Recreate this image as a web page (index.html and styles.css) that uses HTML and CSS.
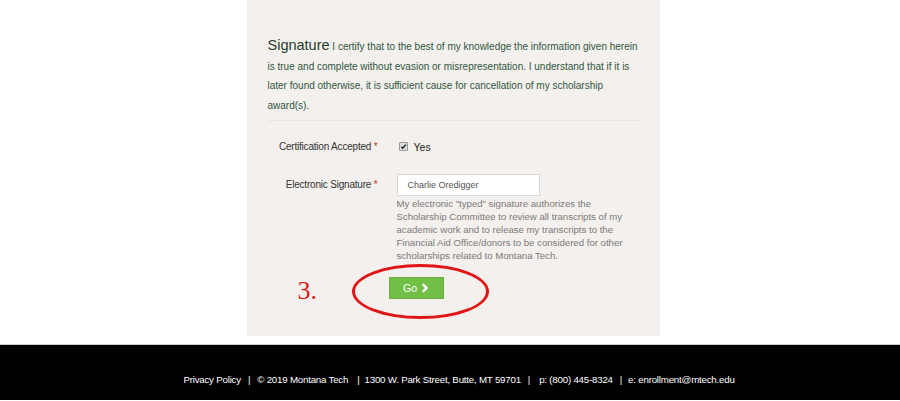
FILE: index.html
```html
<!DOCTYPE html>
<html>
<head>
<meta charset="utf-8">
<link rel="stylesheet" href="styles.css">
</head>
<body>
<main class="page">
  <section class="panel">
    <p class="intro"><span class="intro-title">Signature</span> I certify that to the best of my knowledge the information given herein is true and complete without evasion or misrepresentation. I understand that if it is later found otherwise, it is sufficient cause for cancellation of my scholarship award(s).</p>
    <hr class="rule">
    <div class="form">
      <div class="label">Certification Accepted <span class="req">*</span></div>
      <div class="control check-row"><span class="checkbox"><svg viewBox="0 0 8 8" width="8" height="8"><path d="M1.5 4.2 L3.2 6 L6.6 1.8" fill="none" stroke="#222" stroke-width="1.6"/></svg></span><span class="yes">Yes</span></div>
      <div class="label label-sig">Electronic Signature <span class="req">*</span></div>
      <div class="control">
        <div class="input">Charlie Oredigger</div>
        <p class="help">My electronic "typed" signature authorizes the Scholarship Committee to review all transcripts of my academic work and to release my transcripts to the Financial Aid Office/donors to be considered for other scholarships related to Montana Tech.</p>
      </div>
      <div class="label step-cell"></div>
      <div class="control btn-cell">
        <span class="step">3.</span>
        <span class="ring"></span>
        <button class="go">Go <svg viewBox="0 0 8 10" width="8" height="10"><path d="M1.6 1.2 L5.6 5 L1.6 8.8" fill="none" stroke="#fff" stroke-width="2.4"/></svg></button>
      </div>
    </div>
  </section>
</main>
<footer class="footer">
  <span>Privacy Policy</span><span class="sep sep-1">|</span><span>© 2019 Montana Tech</span><span class="sep sep-2">|</span><span>1300 W. Park Street, Butte, MT 59701</span><span class="sep sep-3">|</span><span>p: (800) 445-8324</span><span class="sep sep-4">|</span><span>e: enrollment@mtech.edu</span>
</footer>
</body>
</html>
```

FILE: styles.css
```css
html, body {
  margin: 0;
  padding: 0;
  background: #fff;
  font-family: "Liberation Sans", Arial, sans-serif;
}
.page {
  display: flex;
  justify-content: center;
  padding-left: 6px;
  padding-bottom: 8px;
  border-bottom: 1px solid #c9c9c9;
}
.panel {
  width: 372px;
  height: 300px;
  background: #f4f0ed;
  padding: 36px 20px 0 21px;
}
.intro {
  margin: 0;
  font-size: 10px;
  line-height: 19.5px;
  color: #2f5640;
}
.intro-title {
  font-size: 14.5px;
  color: #1f3d2c;
}
.rule {
  margin: 5px 0 0;
  border: 0;
  border-top: 1px solid #ebe5e1;
}
.form {
  display: grid;
  grid-template-columns: 110px 1fr;
  column-gap: 19px;
  margin-top: 17px;
  font-size: 10px;
  color: #333;
}
.label {
  text-align: right;
  line-height: 17px;
  letter-spacing: -0.2px;
  white-space: nowrap;
}
.req { color: #c0392b; }
.check-row {
  display: flex;
  align-items: center;
  gap: 6px;
  height: 17px;
  padding-left: 2px;
}
.checkbox {
  width: 7px;
  height: 7px;
  background: #ddd;
  border: 1px solid #999;
  border-radius: 1px;
  display: flex;
}
.checkbox svg { display: block; width: 7px; height: 7px; }
.yes { font-size: 10.5px; color: #222; }
.label-sig {
  margin-top: 19px;
  line-height: 22px;
}
.control { min-width: 0; }
.input {
  margin-top: 19px;
  width: 131px;
  height: 20px;
  line-height: 20px;
  border: 1px solid #d9d9d9;
  background: #fff;
  padding-left: 10px;
  font-size: 9px;
  color: #555;
}
.help {
  margin: 1px 0 0;
  width: 232px;
  font-size: 9.6px;
  line-height: 13px;
  color: #7a7a7a;
}
.btn-cell {
  position: relative;
  padding-top: 15px;
  height: 23px;
}
.go {
  display: inline-flex;
  align-items: center;
  gap: 4px;
  height: 22px;
  width: 55px;
  justify-content: center;
  padding: 0;
  background: #72bf46;
  border: 1px solid #64b03a;
  color: #fff;
  font-family: "Liberation Sans", Arial, sans-serif;
  font-size: 10.5px;
  margin-left: -8px;
}
.ring {
  position: absolute;
  left: -45px;
  top: 2px;
  width: 131px;
  height: 49px;
  border: 3px solid #e01515;
  border-radius: 50%;
}
.step {
  position: absolute;
  left: -99px;
  top: 14px;
  font-family: "Liberation Serif", "Times New Roman", serif;
  font-size: 26px;
  color: #e01515;
}
.footer {
  background: #000;
  height: 55px;
  display: flex;
  justify-content: center;
  align-items: center;
  padding-top: 13px;
  padding-left: 18px;
  box-sizing: border-box;
  color: #fff;
  font-size: 9.7px;
  letter-spacing: -0.2px;
}
.sep-1 { margin: 0 7px; }
.sep-2 { margin: 0 5px 0 9px; }
.sep-3 { margin: 0 9px 0 7px; }
.sep-4 { margin: 0 6px 0 7px; }
```
